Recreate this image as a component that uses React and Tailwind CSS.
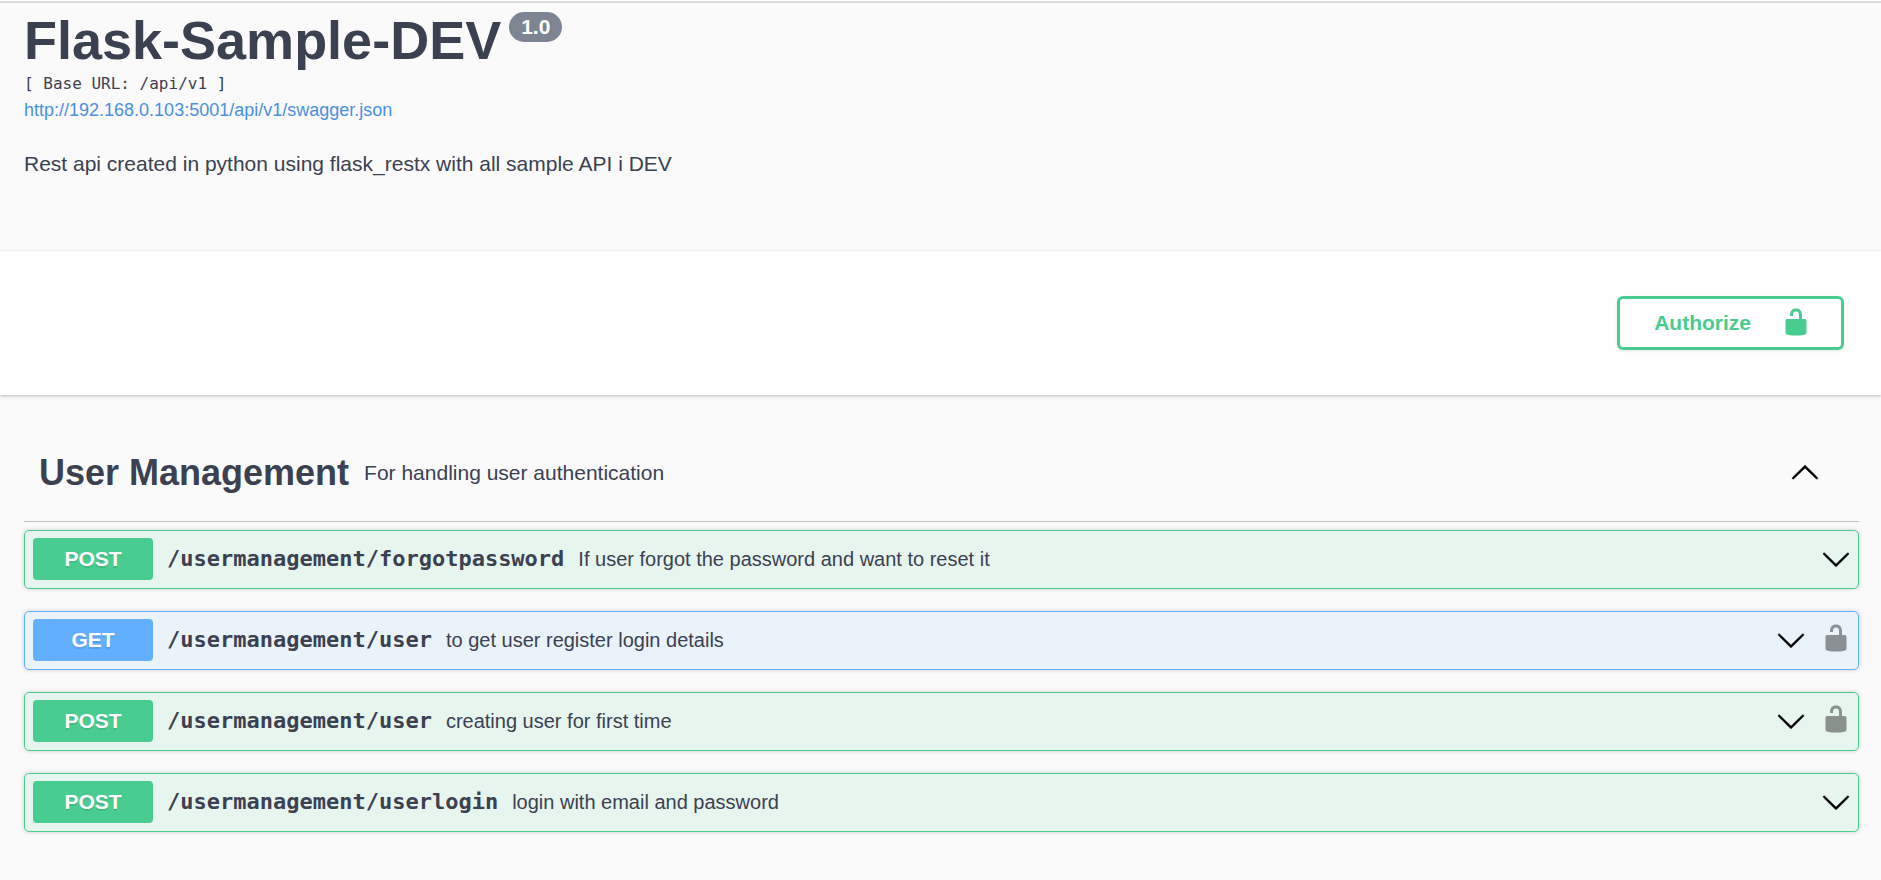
import React, { useState } from "react";

const operations = [
  {
    method: "POST",
    path: "/usermanagement/forgotpassword",
    summary: "If user forgot the password and want to reset it",
    locked: false,
  },
  {
    method: "GET",
    path: "/usermanagement/user",
    summary: "to get user register login details",
    locked: true,
  },
  {
    method: "POST",
    path: "/usermanagement/user",
    summary: "creating user for first time",
    locked: true,
  },
  {
    method: "POST",
    path: "/usermanagement/userlogin",
    summary: "login with email and password",
    locked: false,
  },
];

const methodStyles = {
  POST: { row: "border-[#49cc90] bg-[#49cc90]/10", badge: "bg-[#49cc90]" },
  GET: { row: "border-[#61affe] bg-[#61affe]/10", badge: "bg-[#61affe]" },
};

function ArrowIcon({ up = false }) {
  return (
    <svg
      viewBox="0 0 20 20"
      className={up ? "size-[30px] rotate-180" : "size-[30px]"}
      fill="currentColor"
      stroke="currentColor"
      strokeWidth="0.25"
      aria-hidden="true"
    >
      <path d="M17.418 6.109c.272-.268.709-.268.979 0s.271.701 0 .969l-7.908 7.83c-.27.268-.707.268-.979 0l-7.908-7.83c-.27-.268-.27-.701 0-.969s.709-.268.979 0L10 13.25l7.418-7.141z" />
    </svg>
  );
}

function UnlockedIcon() {
  return (
    <svg viewBox="0 0 20 20" className="size-[30px]" fill="currentColor" aria-hidden="true">
      <path d="M15.8 8H14V5.6C14 2.703 12.665 1 10 1 7.334 1 6 2.703 6 5.6V6h2v-.801C8 3.754 8.797 3 10 3c1.203 0 2 .754 2 2.199V8H4c-.553 0-1 .646-1 1.199V17c0 .549.428 1.139.951 1.307l1.197.387C5.672 18.861 6.55 19 7.1 19h5.8c.549 0 1.428-.139 1.951-.307l1.196-.387c.524-.167.953-.757.953-1.306V9.199C17 8.646 16.352 8 15.8 8z" />
    </svg>
  );
}

function Operation({ method, path, summary, locked }) {
  const styles = methodStyles[method];
  return (
    <li
      className={`flex items-center rounded-[5px] border pt-[7px] pr-[7px] pb-2 pl-2 shadow-[0_0_4px_rgba(0,0,0,0.19)] ${styles.row}`}
    >
      <button type="button" className="flex min-w-0 flex-1 items-center text-left">
        <span
          className={`w-[120px] shrink-0 rounded-[4px] text-center text-[21px] leading-[42px] font-bold text-white [text-shadow:0_2px_0_rgba(0,0,0,0.1)] ${styles.badge}`}
        >
          {method}
        </span>
        <span className="px-[14px] font-['DejaVu_Sans_Mono',monospace] text-[22px] leading-[30px] font-bold">
          {path}
        </span>
        <span className="text-[20px] leading-[30px]">{summary}</span>
      </button>
      <div className="flex items-center gap-[15px]">
        <button type="button" aria-label={`Expand ${method} ${path}`} className="text-black">
          <ArrowIcon />
        </button>
        {locked && (
          <button
            type="button"
            aria-label={`Authorization for ${method} ${path}`}
            className="pb-1 text-black opacity-40"
          >
            <UnlockedIcon />
          </button>
        )}
      </div>
    </li>
  );
}

export default function App() {
  const [open, setOpen] = useState(true);
  return (
    <div className="min-h-screen bg-[#fafafa] font-['Liberation_Sans',Arial,sans-serif] text-[#3b4151]">
      <header className="mt-px border-t-2 border-[#d8dddc] px-6 pt-[7px] pb-[72px]">
        <div className="flex items-start gap-2 pb-px">
          <h1 className="text-[54px] leading-[60px] font-bold">Flask-Sample-DEV</h1>
          <span className="mt-0.5 rounded-full bg-[#7d8492] px-3 text-[21px] leading-[30px] font-bold text-white">
            1.0
          </span>
        </div>
        <p className="font-['DejaVu_Sans_Mono',monospace] text-[16px] leading-[26px]">
          [ Base URL: /api/v1 ]
        </p>
        <a
          href="http://192.168.0.103:5001/api/v1/swagger.json"
          className="block w-fit text-[18px] leading-[26px] text-[#4990e2]"
        >
          http://192.168.0.103:5001/api/v1/swagger.json
        </a>
        <p className="mt-[26px] text-[21px] leading-[30px]">
          Rest api created in python using flask_restx with all sample API i DEV
        </p>
      </header>

      <section className="flex justify-end bg-white py-[45px] pr-[37px] shadow-[0_1px_3px_rgba(0,0,0,0.25)]">
        <button
          type="button"
          className="flex h-[54px] items-center gap-[30px] rounded-[6px] border-3 border-[#49cc90] pr-[30px] pl-[34px] text-[21px] font-bold text-[#49cc90] shadow-[0_1px_3px_rgba(0,0,0,0.1)]"
        >
          Authorize
          <span className="pb-[2px]">
            <UnlockedIcon />
          </span>
        </button>
      </section>

      <main className="pt-[45px] pr-[22px] pb-[45px] pl-6">
        <div className="flex items-center border-b border-[#3b4151]/30 pt-[7px] pr-[39px] pb-[23px] pl-[15px]">
          <h2 className="text-[36px] leading-[51px] font-bold">User Management</h2>
          <p className="flex-1 px-[15px] text-[21px] leading-[51px]">
            For handling user authentication
          </p>
          <button
            type="button"
            aria-label="Toggle User Management"
            aria-expanded={open}
            onClick={() => setOpen(!open)}
            className="text-black"
          >
            <ArrowIcon up={open} />
          </button>
        </div>
        {open && (
          <ul className="mt-2 flex flex-col gap-[22px]">
            {operations.map((operation) => (
              <Operation key={operation.method + operation.path} {...operation} />
            ))}
          </ul>
        )}
      </main>
    </div>
  );
}
